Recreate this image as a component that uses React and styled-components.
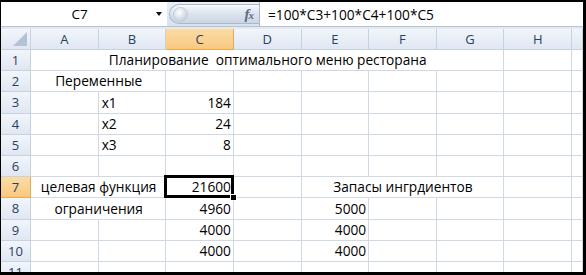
import styled, { createGlobalStyle } from "styled-components";

const GlobalStyle = createGlobalStyle`
  html, body {
    margin: 0;
    padding: 0;
    background: #fff;
    overflow: hidden;
  }
`;

const COLS = ['A', 'B', 'C', 'D', 'E', 'F', 'G', 'H', 'I'];
const TEMPLATE = '30px repeat(8, 67.625px) 1fr';

const Frame = styled('div')`
  box-sizing: border-box;
  width: 586px;
  height: 275px;
  border-style: solid;
  border-color: #000;
  border-width: 2px 3px 3px 1px;
  overflow: hidden;
  display: flex;
  flex-direction: column;
  font-family: "Open Sans", "Noto Sans", sans-serif;
  font-size: 13.7px;
  color: #000;
  background: #fff;
`;

const FormulaBar = styled('div')`
  display: flex;
  align-items: stretch;
  height: 24px;
  flex: none;
  background: linear-gradient(#e9eff7, #d8e2ef);
  border-bottom: 1px solid #b4c3d6;
`;

const NameBox = styled('div')`
  width: 166px;
  display: flex;
  align-items: center;
  background: #fff;
  font-size: 13.5px;
`;

const NameText = styled('span')`
  flex: 1;
  text-align: center;
  padding-left: 2px;
`;

const DropArrow = styled('span')`
  width: 0;
  height: 0;
  margin-right: 5px;
  border-left: 3.5px solid transparent;
  border-right: 3.5px solid transparent;
  border-top: 4px solid #111;
`;

const Pill = styled('div')`
  box-sizing: border-box;
  width: 90px;
  margin: 2px 0 2px 2px;
  display: flex;
  align-items: center;
  justify-content: space-between;
  border: 1px solid #a9b8cc;
  border-right: none;
  border-radius: 11px 0 0 11px;
  background: linear-gradient(#f6f8fb, #dae2ed 55%, #cbd6e4);
  padding: 0 6px 0 4px;
`;

const Knob = styled('span')`
  width: 13px;
  height: 13px;
  border-radius: 50%;
  background: radial-gradient(circle at 40% 35%, #ffffff, #c9d2de 70%, #aeb9c8);
  box-shadow: 0 0 0 1px #c2ccd9;
`;

const Fx = styled('span')`
  font-family: "Liberation Serif", serif;
  font-style: italic;
  font-weight: bold;
  font-size: 15px;
  color: #5b6b80;
  letter-spacing: -1px;

  small {
    font-size: 11px;
  }
`;

const FormulaInput = styled('div')`
  flex: 1;
  display: flex;
  align-items: center;
  padding-left: 8px;
  background: #fff;
  border-left: 1px solid #a9b8cc;
`;

const Gap = styled('div')`
  height: 2px;
  flex: none;
  background: #e3e9f1;
`;

const Line = styled('div')`
  display: grid;
  grid-template-columns: ${TEMPLATE};
  height: ${p => p.$h};
  flex: none;
`;

const Head = styled('div')`
  box-sizing: border-box;
  display: flex;
  align-items: center;
  justify-content: center;
  color: #27415f;
  font-size: 13px;
  border-right: 1px solid ${p => (p.$active ? '#f2a73d' : '#c5d2e2')};
  border-bottom: 1px solid ${p => (p.$active ? '#f2a73d' : '#c5d2e2')};
  background: ${p => (p.$active
    ? 'linear-gradient(#fbdca6, #f8c981)'
    : 'linear-gradient(#f2f6fb, #dfe7f2)')};
`;

const Corner = styled(Head)`
  position: relative;

  &::after {
    content: '';
    position: absolute;
    right: 3px;
    bottom: 3px;
    width: 14px;
    height: 14px;
    background: #b3c2d6;
    clip-path: polygon(100% 0, 100% 100%, 0 100%);
  }
`;

const Cell = styled('div')`
  box-sizing: border-box;
  position: relative;
  grid-column: span ${p => p.$span || 1};
  display: flex;
  align-items: flex-end;
  justify-content: ${p => p.$align || 'flex-start'};
  padding: 0 2px 2px 3px;
  line-height: 17px;
  white-space: pre;
  border-right: 1px solid #d0d7e5;
  border-bottom: 1px solid #d0d7e5;

  ${p => p.$selected && `
    &::after {
      content: '';
      position: absolute;
      left: -2px;
      top: -2px;
      right: -1px;
      bottom: -1px;
      border: 3px solid #000;
    }
    &::before {
      content: '';
      position: absolute;
      right: -4px;
      bottom: -4px;
      width: 5px;
      height: 5px;
      background: #000;
      border: 1px solid #fff;
      z-index: 2;
    }
  `}
`;

const ALIGN = { left: 'flex-start', right: 'flex-end', center: 'center' };

const sheet = {
  1: { A: { text: 'Планирование  оптимального меню ресторана', span: 7, align: 'center' } },
  2: { A: { text: 'Переменные', span: 2, align: 'center' } },
  3: { B: { text: 'x1' }, C: { text: '184', align: 'right' } },
  4: { B: { text: 'x2' }, C: { text: '24', align: 'right' } },
  5: { B: { text: 'x3' }, C: { text: '8', align: 'right' } },
  6: {},
  7: {
    A: { text: 'целевая функция', span: 2, align: 'center' },
    C: { text: '21600', align: 'right', selected: true },
    E: { text: 'Запасы ингрдиентов', span: 3, align: 'center' },
  },
  8: {
    A: { text: 'ограничения', span: 2, align: 'center' },
    C: { text: '4960', align: 'right' },
    E: { text: '5000', align: 'right' },
  },
  9: { C: { text: '4000', align: 'right' }, E: { text: '4000', align: 'right' } },
  10: { C: { text: '4000', align: 'right' }, E: { text: '4000', align: 'right' } },
  11: {},
};

const Row = ({ num, data }) => {
  const cells = [];
  let skip = 0;
  COLS.forEach(col => {
    if (skip > 0) { skip--; return; }
    const c = data[col];
    if (c) {
      skip = (c.span || 1) - 1;
      cells.push(
        <Cell key={col} $span={c.span} $align={ALIGN[c.align || 'left']} $selected={c.selected}>
          {c.text}
        </Cell>
      );
    } else {
      cells.push(<Cell key={col} />);
    }
  });
  return (
    <Line $h="21.2px">
      <Head $active={num === 7}>{num}</Head>
      {cells}
    </Line>
  );
};

const App = () => {
  return (
    <Frame>
      <GlobalStyle />
      <FormulaBar>
        <NameBox>
          <NameText>C7</NameText>
          <DropArrow />
        </NameBox>
        <Pill>
          <Knob />
          <Fx>f<small>x</small></Fx>
        </Pill>
        <FormulaInput>=100*C3+100*C4+100*C5</FormulaInput>
      </FormulaBar>
      <Gap />
      <Line $h="21px">
        <Corner />
        {COLS.map(col => (
          <Head key={col} $active={col === 'C'}>{col === 'I' ? '' : col}</Head>
        ))}
      </Line>
      {Object.keys(sheet).map(n => (
        <Row key={n} num={Number(n)} data={sheet[n]} />
      ))}
    </Frame>
  );
};

export default App;
